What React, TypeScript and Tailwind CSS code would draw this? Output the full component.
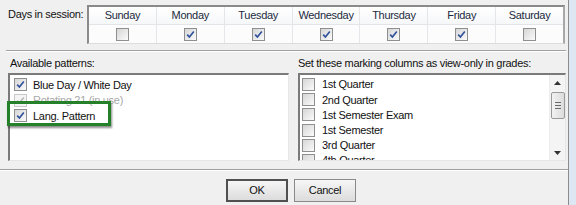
import React from 'react';

const days = [
  { name: 'Sunday', on: false },
  { name: 'Monday', on: true },
  { name: 'Tuesday', on: true },
  { name: 'Wednesday', on: true },
  { name: 'Thursday', on: true },
  { name: 'Friday', on: true },
  { name: 'Saturday', on: false },
];

const patterns = [
  { label: 'Blue Day / White Day', on: true, disabled: false },
  { label: 'Rotating 21 (in use)', on: true, disabled: true },
  { label: 'Lang. Pattern', on: true, disabled: false },
];

const columns = ['1st Quarter', '2nd Quarter', '1st Semester Exam', '1st Semester', '3rd Quarter', '4th Quarter'];

const Check: React.FC<{ checked?: boolean; disabled?: boolean }> = ({ checked, disabled }) => (
  <span
    className={`w-[13px] h-[13px] shrink-0 border flex items-center justify-center ${
      disabled ? 'border-[#c8c8c8] bg-[#f4f4f4]' : 'border-[#8e8f8f] bg-linear-to-br from-[#d6d6d6] to-[#fbfbfb]'
    }`}
  >
    {checked && (
      <svg viewBox="0 0 9 9" className="w-[9px] h-[9px]">
        <path
          d="M1.2 4.6 L3.4 7 L7.8 1.4"
          fill="none"
          stroke={disabled ? '#b8b8b8' : '#2f4f9a'}
          strokeWidth="1.6"
        />
      </svg>
    )}
  </span>
);

export default function App() {
  return (
    <div className="w-[576px] h-[205px] flex bg-[#dce7f3] text-[11px] text-[#111] tracking-[-0.3px] overflow-hidden" style={{ fontFamily: '"Liberation Sans", Arial, sans-serif' }}>
      <div className="w-[569px] h-full bg-[#f0f0f0] border-r border-[#8c8c8c] flex flex-col">
        {/* days in session */}
        <div className="flex pt-[5px] pl-[8px]">
          <div className="w-[79px] pt-[3px] leading-[13px]">Days in session:</div>
          <div className="w-[478px] h-[39px] border-t-2 border-l-2 border-[#8a8a8a] border-r-2 border-r-[#a8a8a8] border-b border-b-[#dcdcdc] bg-white flex">
            {days.map((d) => (
              <div key={d.name} className="flex-1 flex flex-col border-r border-[#e4e6ea] last:border-r-0">
                <div className="h-[18px] flex items-center justify-center bg-linear-to-b from-white to-[#f6f7f9] border-b border-[#e2e4e8] text-[#1b2a3e]">
                  {d.name}
                </div>
                <div className="flex-1 flex items-center justify-center bg-[#fcfcfc]">
                  <Check checked={d.on} />
                </div>
              </div>
            ))}
          </div>
        </div>

        {/* separator */}
        <div className="mt-[6px] ml-[6px] mr-[2px] border-t border-[#a0a0a0] border-b border-b-white" />

        {/* patterns + marking columns */}
        <div className="flex pl-[8px] pt-[4px] gap-[9px]">
          <div className="w-[281px] flex flex-col">
            <div className="pl-[2px] h-[14px] leading-[14px]">Available patterns:</div>
            <div className="relative mt-[3px] h-[88px] bg-white border-t-2 border-l-2 border-[#7a7a7a] border-r border-b border-r-[#e6e6e6] border-b-[#e6e6e6] pt-[2px]">
              {patterns.map((p) => (
                <div key={p.label} className="h-[15.5px] flex items-center pl-[4px] gap-[6px]">
                  <Check checked={p.on} disabled={p.disabled} />
                  <span className={p.disabled ? 'text-[#a8a8a8]' : ''}>{p.label}</span>
                </div>
              ))}
              <div className="absolute left-[-3px] top-[26px] w-[104px] h-[25px] border-[3px] border-[#24812a] shadow-[1px_2px_2px_rgba(0,0,0,0.45)]" />
            </div>
          </div>
          <div className="w-[268px] flex flex-col">
            <div className="h-[14px] leading-[14px]">Set these marking columns as view-only in grades:</div>
            <div className="mt-[3px] h-[88px] bg-white border-t-2 border-l-2 border-[#7a7a7a] border-r border-b border-r-[#e6e6e6] border-b-[#e6e6e6] flex overflow-hidden">
              <div className="flex-1 pt-[2px] overflow-hidden">
                {columns.map((c) => (
                  <div key={c} className="h-[15.2px] flex items-center pl-[2px] gap-[7px]">
                    <Check />
                    <span>{c}</span>
                  </div>
                ))}
              </div>
              <div className="w-[16px] bg-[#f4f4f4] border-l border-[#ececec] flex flex-col items-center">
                <div className="h-[16px] flex items-center justify-center">
                  <svg viewBox="0 0 7 4" className="w-[7px] h-[4px]"><path d="M0 4 L3.5 0 L7 4 Z" fill="#333" /></svg>
                </div>
                <div className="w-[14px] h-[27px] mt-[1px] rounded-[2px] border border-[#9a9a9a] bg-linear-to-r from-[#f2f2f2] to-[#dcdcdc] flex flex-col items-center justify-center gap-[2px]">
                  <span className="w-[6px] h-px bg-[#6a6a6a]" />
                  <span className="w-[6px] h-px bg-[#6a6a6a]" />
                  <span className="w-[6px] h-px bg-[#6a6a6a]" />
                </div>
                <div className="flex-1" />
                <div className="h-[14px] flex items-center justify-center">
                  <svg viewBox="0 0 7 4" className="w-[7px] h-[4px]"><path d="M0 0 L7 0 L3.5 4 Z" fill="#333" /></svg>
                </div>
              </div>
            </div>
          </div>
        </div>

        {/* bottom separator */}
        <div className="mt-[8px] border-t border-[#a0a0a0] border-b border-b-white" />

        {/* buttons */}
        <div className="flex justify-center gap-[6px] pt-[8px] pl-[14px]">
          <button className="w-[62px] h-[23px] border-2 border-[#505050] bg-linear-to-b from-[#f6f6f6] to-[#dcdcdc] text-[11px]">OK</button>
          <button className="w-[62px] h-[23px] border border-[#8a8a8a] bg-linear-to-b from-[#f6f6f6] to-[#dcdcdc] text-[11px]">Cancel</button>
        </div>
      </div>
    </div>
  );
}
